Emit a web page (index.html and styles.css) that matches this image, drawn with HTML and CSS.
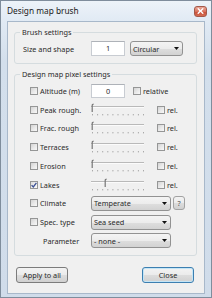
FILE: index.html
```html
<!DOCTYPE html>
<html>
<head>
<meta charset="utf-8">
<link rel="stylesheet" href="styles.css">
</head>
<body>
<div class="window">
  <div class="titlebar">
    <span class="title">Design map brush</span>
    <span class="close-btn"><svg width="7" height="6" viewBox="0 0 7 6"><path d="M1.2 0.8 L5.8 5.2 M5.8 0.8 L1.2 5.2" stroke="#fff" stroke-width="1.4" stroke-linecap="round"/></svg></span>
  </div>
  <div class="client">
    <fieldset class="group g1">
      <legend>Brush settings</legend>
      <div class="row">
        <span class="lbl1">Size and shape</span>
        <span class="textbox w-num">1</span>
        <span class="combo w-shape"><span>Circular</span><svg class="arrow" width="5" height="3" viewBox="0 0 5 3"><path d="M0 0 H5 L2.5 3 Z" fill="#111"/></svg></span>
      </div>
    </fieldset>
    <fieldset class="group g2">
      <legend>Design map pixel settings</legend>
      <div class="prow">
        <span class="pl"><span class="cb"></span>Altitude (m)</span>
        <span class="textbox w-num alt">0</span>
        <span class="cb after-tb"></span><span class="small">relative</span>
      </div>
      <div class="prow">
        <span class="pl"><span class="cb"></span>Peak rough.</span>
        <svg class="slider" width="54" height="14" viewBox="0 0 54 14"><rect x="0" y="3" width="53" height="1" fill="#b9b9b9"/><rect x="0" y="4" width="53" height="1" fill="#fbfbfb"/><g fill="#a9a9a9"><rect x="1" y="11" width="1" height="1.4"/><rect x="6.1" y="11" width="1" height="1.4"/><rect x="11.2" y="11" width="1" height="1.4"/><rect x="16.3" y="11" width="1" height="1.4"/><rect x="21.4" y="11" width="1" height="1.4"/><rect x="26.5" y="11" width="1" height="1.4"/><rect x="31.6" y="11" width="1" height="1.4"/><rect x="36.7" y="11" width="1" height="1.4"/><rect x="41.8" y="11" width="1" height="1.4"/><rect x="46.9" y="11" width="1" height="1.4"/><rect x="52" y="11" width="1" height="1.4"/></g><path d="M1.2 9 V2.2 Q1.2 1.2 2.6 1.2" stroke="#767676" stroke-width="1.2" fill="none"/></svg>
        <span class="cb rel"></span><span class="small">rel.</span>
      </div>
      <div class="prow">
        <span class="pl"><span class="cb"></span>Frac. rough</span>
        <svg class="slider" width="54" height="14" viewBox="0 0 54 14"><rect x="0" y="3" width="53" height="1" fill="#b9b9b9"/><rect x="0" y="4" width="53" height="1" fill="#fbfbfb"/><g fill="#a9a9a9"><rect x="1" y="11" width="1" height="1.4"/><rect x="6.1" y="11" width="1" height="1.4"/><rect x="11.2" y="11" width="1" height="1.4"/><rect x="16.3" y="11" width="1" height="1.4"/><rect x="21.4" y="11" width="1" height="1.4"/><rect x="26.5" y="11" width="1" height="1.4"/><rect x="31.6" y="11" width="1" height="1.4"/><rect x="36.7" y="11" width="1" height="1.4"/><rect x="41.8" y="11" width="1" height="1.4"/><rect x="46.9" y="11" width="1" height="1.4"/><rect x="52" y="11" width="1" height="1.4"/></g><path d="M1.2 9 V2.2 Q1.2 1.2 2.6 1.2" stroke="#767676" stroke-width="1.2" fill="none"/></svg>
        <span class="cb rel"></span><span class="small">rel.</span>
      </div>
      <div class="prow">
        <span class="pl"><span class="cb"></span>Terraces</span>
        <svg class="slider" width="54" height="14" viewBox="0 0 54 14"><rect x="0" y="3" width="53" height="1" fill="#b9b9b9"/><rect x="0" y="4" width="53" height="1" fill="#fbfbfb"/><g fill="#a9a9a9"><rect x="1" y="11" width="1" height="1.4"/><rect x="6.1" y="11" width="1" height="1.4"/><rect x="11.2" y="11" width="1" height="1.4"/><rect x="16.3" y="11" width="1" height="1.4"/><rect x="21.4" y="11" width="1" height="1.4"/><rect x="26.5" y="11" width="1" height="1.4"/><rect x="31.6" y="11" width="1" height="1.4"/><rect x="36.7" y="11" width="1" height="1.4"/><rect x="41.8" y="11" width="1" height="1.4"/><rect x="46.9" y="11" width="1" height="1.4"/><rect x="52" y="11" width="1" height="1.4"/></g><path d="M1.2 9 V2.2 Q1.2 1.2 2.6 1.2" stroke="#767676" stroke-width="1.2" fill="none"/></svg>
        <span class="cb rel"></span><span class="small">rel.</span>
      </div>
      <div class="prow">
        <span class="pl"><span class="cb"></span>Erosion</span>
        <svg class="slider" width="54" height="14" viewBox="0 0 54 14"><rect x="0" y="3" width="53" height="1" fill="#b9b9b9"/><rect x="0" y="4" width="53" height="1" fill="#fbfbfb"/><g fill="#a9a9a9"><rect x="1" y="11" width="1" height="1.4"/><rect x="6.1" y="11" width="1" height="1.4"/><rect x="11.2" y="11" width="1" height="1.4"/><rect x="16.3" y="11" width="1" height="1.4"/><rect x="21.4" y="11" width="1" height="1.4"/><rect x="26.5" y="11" width="1" height="1.4"/><rect x="31.6" y="11" width="1" height="1.4"/><rect x="36.7" y="11" width="1" height="1.4"/><rect x="41.8" y="11" width="1" height="1.4"/><rect x="46.9" y="11" width="1" height="1.4"/><rect x="52" y="11" width="1" height="1.4"/></g><path d="M1.2 9 V2.2 Q1.2 1.2 2.6 1.2" stroke="#767676" stroke-width="1.2" fill="none"/></svg>
        <span class="cb rel"></span><span class="small">rel.</span>
      </div>
      <div class="prow">
        <span class="pl"><span class="cb checked"><svg width="6" height="6" viewBox="0 0 6 6"><path d="M0.6 3.1 L2.3 5 L5.4 0.8" stroke="#3d5296" stroke-width="1.3" fill="none"/></svg></span>Lakes</span>
        <svg class="slider" width="54" height="14" viewBox="0 0 54 14"><rect x="0" y="3" width="53" height="1" fill="#b9b9b9"/><rect x="0" y="4" width="53" height="1" fill="#fbfbfb"/><g fill="#a9a9a9"><rect x="1" y="11" width="1" height="1.4"/><rect x="6.1" y="11" width="1" height="1.4"/><rect x="11.2" y="11" width="1" height="1.4"/><rect x="16.3" y="11" width="1" height="1.4"/><rect x="21.4" y="11" width="1" height="1.4"/><rect x="26.5" y="11" width="1" height="1.4"/><rect x="31.6" y="11" width="1" height="1.4"/><rect x="36.7" y="11" width="1" height="1.4"/><rect x="41.8" y="11" width="1" height="1.4"/><rect x="46.9" y="11" width="1" height="1.4"/><rect x="52" y="11" width="1" height="1.4"/></g><path d="M14.2 9 V2.2 Q14.2 1.2 15.6 1.2" stroke="#767676" stroke-width="1.2" fill="none"/></svg>
        <span class="cb rel"></span><span class="small">rel.</span>
      </div>
      <div class="prow">
        <span class="pl"><span class="cb"></span>Climate</span>
        <span class="combo w-wide"><span>Temperate</span><svg class="arrow" width="5" height="3" viewBox="0 0 5 3"><path d="M0 0 H5 L2.5 3 Z" fill="#111"/></svg></span>
        <span class="btn qbtn">?</span>
      </div>
      <div class="prow">
        <span class="pl"><span class="cb"></span>Spec. type</span>
        <span class="combo w-wide"><span>Sea seed</span><svg class="arrow" width="5" height="3" viewBox="0 0 5 3"><path d="M0 0 H5 L2.5 3 Z" fill="#111"/></svg></span>
      </div>
      <div class="prow">
        <span class="pl param">Parameter</span>
        <span class="combo w-wide"><span>- none -</span><svg class="arrow" width="5" height="3" viewBox="0 0 5 3"><path d="M0 0 H5 L2.5 3 Z" fill="#111"/></svg></span>
      </div>
    </fieldset>
    <div class="buttons">
      <span class="btn big">Apply to all</span>
      <span class="btn big default">Close</span>
    </div>
  </div>
</div>
</body>
</html>
```

FILE: styles.css
```css
html, body {
  margin: 0;
  padding: 0;
}
body {
  width: 212px;
  height: 298px;
  overflow: hidden;
  font-family: "Noto Sans", "DejaVu Sans", sans-serif;
  font-size: 7.3px;
  color: #2a2a2a;
  background: #d3dfec;
}
.window {
  box-sizing: border-box;
  width: 212px;
  height: 298px;
  border: 1px solid #7f8d9c;
  background: linear-gradient(#edf3f9 0, #e1eaf4 20px, #d3dfec 60px, #d0dcea 100%);
  display: flex;
  flex-direction: column;
}
.titlebar {
  height: 20px;
  flex: none;
  display: flex;
  align-items: center;
  justify-content: space-between;
  padding: 0 4px 0 6px;
}
.title {
  font-size: 8.3px;
  color: #1a1a1a;
  line-height: 10px;
}
.close-btn {
  width: 13px;
  height: 11px;
  box-sizing: border-box;
  border: 1px solid #a3594a;
  border-radius: 3px;
  background: linear-gradient(#eaa898 0, #d9735d 50%, #c9503a 51%, #d46c52 100%);
  display: flex;
  align-items: center;
  justify-content: center;
}
.close-btn svg {
  display: block;
}
.client {
  flex: 1;
  margin: 0 6px 3px 6px;
  border: 1px solid #a8b8ca;
  background: #f0f0f0;
  display: flex;
  flex-direction: column;
}
.group {
  border: 1px solid #d5dcdf;
  border-radius: 3px;
  margin: 0 7px 0 6px;
  padding: 0;
  min-width: 0;
}
.group legend {
  padding: 0 2px;
  margin-left: 5px;
  line-height: 10px;
  font-size: 7.3px;
}
.g1 {
  margin-top: 5px;
  padding: 4px 0 7px;
}
.g2 {
  margin-top: 5px;
  padding: 2.6px 0 5px;
}
.row {
  display: flex;
  align-items: center;
  height: 15px;
}
.lbl1 {
  box-sizing: border-box;
  width: 76px;
  padding-left: 8px;
  white-space: nowrap;
}
.textbox {
  box-sizing: border-box;
  height: 15px;
  border: 1px solid #c8ccd2;
  border-top-color: #aeb2b8;
  background: #fff;
  text-align: center;
  line-height: 13px;
}
.w-num {
  width: 34px;
}
.textbox.alt {
  height: 14px;
  line-height: 12px;
}
.combo {
  box-sizing: border-box;
  height: 15px;
  border: 1px solid #929292;
  border-radius: 3px;
  background: linear-gradient(#f4f4f4 0, #ececec 50%, #dedede 51%, #d2d2d2 100%);
  display: flex;
  align-items: center;
  justify-content: space-between;
  padding: 0 3px 0 2px;
  white-space: nowrap;
}
.combo .arrow {
  display: block;
  flex: none;
}
.w-shape {
  width: 53px;
  margin-left: 5px;
}
.w-wide {
  width: 80px;
}
.prow {
  display: flex;
  align-items: center;
  height: 18.75px;
}
.pl {
  box-sizing: border-box;
  width: 76px;
  padding-left: 15px;
  display: flex;
  align-items: center;
  white-space: nowrap;
  flex: none;
}
.pl.param {
  padding-left: 28px;
}
.cb {
  box-sizing: border-box;
  width: 8px;
  height: 8px;
  flex: none;
  border: 1px solid #959696;
  background: linear-gradient(135deg, #d3d3d3 0, #e8e8e8 50%, #f8f8f8 100%);
  margin-right: 2px;
  display: flex;
  align-items: center;
  justify-content: center;
}
.cb svg {
  display: block;
}
.cb.checked {
  background: linear-gradient(135deg, #dcdcdc 0, #f0f0f0 60%, #fbfbfb 100%);
}
.cb.after-tb {
  margin-left: 8px;
}
.cb.rel {
  margin-left: 12px;
}
.slider {
  display: block;
  flex: none;
}
.small {
  white-space: nowrap;
}
.btn {
  box-sizing: border-box;
  border: 1px solid #7c7c7c;
  border-radius: 3px;
  background: linear-gradient(#f3f3f3 0, #ebebeb 50%, #dddddd 51%, #d0d0d0 100%);
  display: flex;
  align-items: center;
  justify-content: center;
  white-space: nowrap;
}
.qbtn {
  width: 12px;
  height: 14px;
  margin-left: 2px;
  border-color: #a2a2a2;
  color: #555;
}
.buttons {
  display: flex;
  justify-content: space-between;
  padding: 0 10px 0 8px;
  margin-top: 11px;
}
.btn.big {
  width: 52px;
  height: 16px;
}
.btn.default {
  border-color: #3c7fb1;
  box-shadow: inset 0 0 0 1px #c4e5f6;
}
```
